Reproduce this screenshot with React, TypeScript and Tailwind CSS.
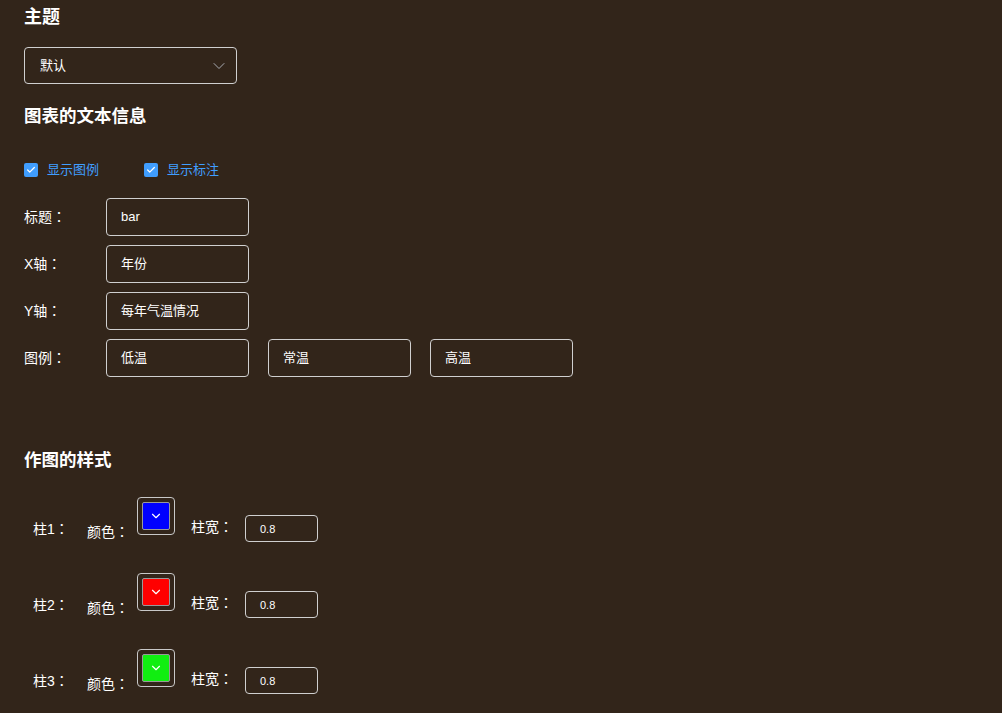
import { ChevronDown, Check } from "lucide-react";

const font = { fontFamily: '"Liberation Sans", "Noto Sans CJK SC", sans-serif' };
const colonFont = { fontFamily: '"Noto Sans CJK TC", sans-serif' };

function Colon() {
  return <span style={colonFont}>：</span>;
}

function TextBox({ value }: { value: string }) {
  return (
    <div className="w-[143px] h-[38px] border border-[#d0d0d0] rounded-[4px] pl-[14px] flex items-center text-[13px] text-white">
      {value}
    </div>
  );
}

function Field({ label, values }: { label: string; values: string[] }) {
  return (
    <div className="flex items-center">
      <div className="w-[82px] text-[14px] text-white">
        {label}
        <Colon />
      </div>
      <div className="flex gap-[19px]">
        {values.map((v) => (
          <TextBox key={v} value={v} />
        ))}
      </div>
    </div>
  );
}

function Checkbox({ label, className }: { label: string; className?: string }) {
  return (
    <div className={`flex items-center gap-[9px] ${className ?? ""}`}>
      <span className="w-[14px] h-[14px] rounded-[2px] bg-[#409eff] flex items-center justify-center">
        <Check className="w-[10px] h-[10px] text-white" strokeWidth={3} />
      </span>
      <span className="text-[13px] text-[#409eff]">{label}</span>
    </div>
  );
}

function BarRow({ name, color }: { name: string; color: string }) {
  return (
    <div className="flex items-start text-[14px] text-white leading-[20px]">
      <div className="w-[54px] ml-[9px] mt-[21px]">
        {name}
        <Colon />
      </div>
      <div className="w-[50px] mt-[24px]">
        颜色
        <Colon />
      </div>
      <div className="w-[38px] h-[38px] border border-[#c8c8c8] rounded-[4px] flex items-center justify-center">
        <div
          className="w-[28px] h-[28px] border border-[#999] rounded-[2px] flex items-center justify-center"
          style={{ backgroundColor: color }}
        >
          <ChevronDown className="w-[14px] h-[14px] text-white" strokeWidth={2} />
        </div>
      </div>
      <div className="w-[54px] ml-[16px] mt-[19px]">
        柱宽
        <Colon />
      </div>
      <div className="w-[73px] h-[27px] mt-[18px] border border-[#d0d0d0] rounded-[4px] pl-[14px] flex items-center text-[11px]">
        0.8
      </div>
    </div>
  );
}

export default function App() {
  return (
    <div className="min-h-[713px] bg-[#32251a] pl-[24px] pt-[5px] pb-[20px]" style={font}>
      <h3 className="text-[18px] leading-[24px] font-bold text-white">主题</h3>
      <div className="mt-[18px] w-[213px] h-[37px] border border-[#d0d0d0] rounded-[4px] pl-[15px] pr-[7px] flex items-center justify-between text-[13px] text-white">
        <span>默认</span>
        <ChevronDown className="w-[20px] h-[20px] text-[#a8abb2]" strokeWidth={1.2} />
      </div>

      <h3 className="mt-[20px] text-[17.5px] leading-[24px] font-bold text-white">图表的文本信息</h3>
      <div className="mt-[32px] h-[20px] flex items-center">
        <Checkbox label="显示图例" className="w-[120px]" />
        <Checkbox label="显示标注" />
      </div>

      <div className="mt-[18px] flex flex-col gap-[9px]">
        <Field label="标题" values={["bar"]} />
        <Field label="X轴" values={["年份"]} />
        <Field label="Y轴" values={["每年气温情况"]} />
        <Field label="图例" values={["低温", "常温", "高温"]} />
      </div>

      <h3 className="mt-[71px] text-[17.5px] leading-[24px] font-bold text-white">作图的样式</h3>
      <div className="mt-[25px] flex flex-col gap-[31px]">
        <BarRow name="柱1" color="#0000ff" />
        <BarRow name="柱2" color="#ff0000" />
        <BarRow name="柱3" color="#11ee11" />
      </div>
    </div>
  );
}
